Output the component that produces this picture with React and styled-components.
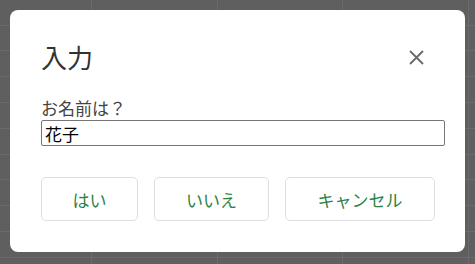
import React from 'react'
import styled, { createGlobalStyle } from 'styled-components'

const GlobalStyle = createGlobalStyle`
    html, body {
        margin: 0;
        padding: 0;
        width: 475px;
        height: 264px;
        overflow: hidden;
    }
    body {
        font-family: "Noto Sans CJK JP", "Noto Sans", sans-serif;
        background-color: #5f5f5f;
        background-image:
            repeating-linear-gradient(90deg, transparent 0 91px, #6b6b6b 91px 92px, transparent 92px 125.7px),
            repeating-linear-gradient(180deg, transparent 0 24.5px, #6b6b6b 24.5px 25.5px, transparent 25.5px 25.8px);
    }
`

const Backdrop = styled.div`
    padding: 10px;
    height: 264px;
    box-sizing: border-box;
`

const Dialog = styled.div`
    width: 455px;
    height: 242px;
    box-sizing: border-box;
    background: #fff;
    border-radius: 8px;
    padding: 32px 20px 31px 31px;
    display: flex;
    flex-direction: column;
`

const Header = styled.div`
    display: flex;
    align-items: center;
    justify-content: space-between;
    height: 30px;
`

const Title = styled.h1`
    margin: 0;
    font-size: 26px;
    font-weight: 400;
    line-height: 30px;
    color: #333;
`

const CloseButton = styled.button`
    border: none;
    background: none;
    padding: 0;
    margin-right: 21px;
    width: 16px;
    height: 16px;
    display: flex;
    align-items: center;
    justify-content: center;
    cursor: pointer;
`

const Label = styled.label`
    margin-top: 25px;
    font-size: 17px;
    line-height: 22px;
    color: #444;
`

const Input = styled.input`
    margin-top: 1px;
    width: 404px;
    height: 26px;
    box-sizing: border-box;
    border: 1px solid #767676;
    border-radius: 2px;
    padding: 0 3px;
    font-family: inherit;
    font-size: 17px;
    color: #000;
    outline: none;
`

const Actions = styled.div`
    margin-top: 31px;
    display: flex;
    gap: 16px;
`

const Button = styled.button`
    height: 44px;
    width: ${p => p.$w}px;
    box-sizing: border-box;
    border: 1px solid #dedede;
    border-radius: 5px;
    background: #fff;
    font-family: inherit;
    font-size: 17px;
    color: #2c8242;
    cursor: pointer;
`

export default function App() {
    return (
        <>
            <GlobalStyle />
            <Backdrop>
                <Dialog>
                    <Header>
                        <Title>入力</Title>
                        <CloseButton aria-label="閉じる">
                            <svg width="15" height="15" viewBox="0 0 15 15">
                                <path d="M1 1 L14 14 M14 1 L1 14" stroke="#6a6a6a" strokeWidth="1.8" />
                            </svg>
                        </CloseButton>
                    </Header>
                    <Label htmlFor="name">お名前は？</Label>
                    <Input id="name" defaultValue="花子" />
                    <Actions>
                        <Button $w={97}>はい</Button>
                        <Button $w={115}>いいえ</Button>
                        <Button $w={150}>キャンセル</Button>
                    </Actions>
                </Dialog>
            </Backdrop>
        </>
    )
}
